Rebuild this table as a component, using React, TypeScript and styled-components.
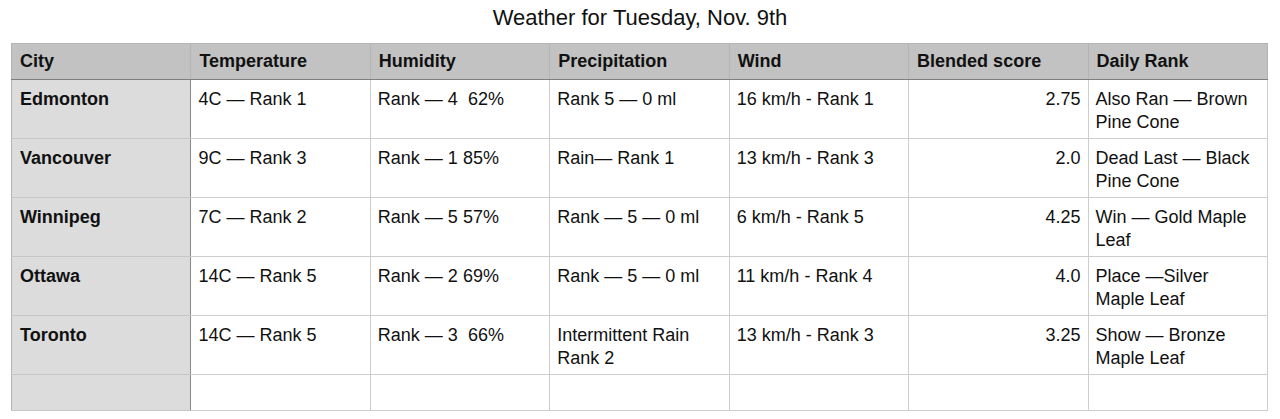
import React from "react";
import styled, { createGlobalStyle } from "styled-components";

const GlobalStyle = createGlobalStyle`
  html, body { margin: 0; padding: 0; background: #ffffff; }
  body { font-family: "Liberation Sans", Arial, Helvetica, sans-serif; color: #111111; }
`;

const Page = styled.div`
  display: flex;
  flex-direction: column;
  align-items: flex-start;
  padding: 5px 0 0 11px;
  width: 1280px;
  box-sizing: border-box;
`;

const Title = styled.h1`
  align-self: stretch;
  margin: 0 11px 13px 0;
  font-size: 22px;
  line-height: 25px;
  font-weight: 400;
  text-align: center;
  color: #111111;
`;

const Table = styled.table`
  width: 1257px;
  table-layout: fixed;
  border-collapse: collapse;
  font-size: 18px;
  line-height: 22.5px;
`;

const HeaderCell = styled.th`
  height: 36px;
  box-sizing: border-box;
  padding: 0 8px;
  background: #c1c2c1;
  border: 1px solid #b3b4b3;
  border-bottom: 1px solid #7e7f7e;
  text-align: left;
  font-weight: 700;
  vertical-align: middle;
`;

const Row = styled.tr<{ $short?: boolean }>`
  height: ${(p) => (p.$short ? "36px" : "59px")};
`;

const CityCell = styled.td`
  padding: 8px 8px 0 8px;
  background: #dcdcdc;
  border: 1px solid #c6c6c6;
  border-left-color: #b3b4b3;
  border-right: 1px solid #8a8a8a;
  font-weight: 700;
  vertical-align: top;
`;

const Cell = styled.td<{ $align?: "left" | "right" }>`
  padding: 8px 7px 0 7px;
  background: #ffffff;
  border: 1px solid #cdcdcd;
  text-align: ${(p) => p.$align ?? "left"};
  vertical-align: top;
  white-space: pre-wrap;
`;

const headers = [
  "City",
  "Temperature",
  "Humidity",
  "Precipitation",
  "Wind",
  "Blended score",
  "Daily Rank",
];

const rows = [
  ["Edmonton", "4C — Rank 1", "Rank — 4  62%", "Rank 5 — 0 ml", "16 km/h - Rank 1", "2.75", "Also Ran — Brown Pine Cone"],
  ["Vancouver", "9C — Rank 3", "Rank — 1 85%", "Rain— Rank 1", "13 km/h - Rank 3", "2.0", "Dead Last — Black Pine Cone"],
  ["Winnipeg", "7C — Rank 2", "Rank — 5 57%", "Rank — 5 — 0 ml", "6 km/h - Rank 5", "4.25", "Win — Gold Maple Leaf"],
  ["Ottawa", "14C — Rank 5", "Rank — 2 69%", "Rank — 5 — 0 ml", "11 km/h - Rank 4", "4.0", "Place —Silver Maple Leaf"],
  ["Toronto", "14C — Rank 5", "Rank — 3  66%", "Intermittent Rain Rank 2", "13 km/h - Rank 3", "3.25", "Show — Bronze Maple Leaf"],
];

export default function App() {
  return (
    <>
      <GlobalStyle />
      <Page>
        <Title>Weather for Tuesday, Nov. 9th</Title>
        <Table>
          <thead>
            <tr>
              {headers.map((h) => (
                <HeaderCell key={h}>{h}</HeaderCell>
              ))}
            </tr>
          </thead>
          <tbody>
            {rows.map((r) => (
              <Row key={r[0]}>
                <CityCell>{r[0]}</CityCell>
                {r.slice(1).map((v, i) => (
                  <Cell key={i} $align={i === 4 ? "right" : "left"}>
                    {v}
                  </Cell>
                ))}
              </Row>
            ))}
            <Row $short>
              <CityCell />
              {[0, 1, 2, 3, 4, 5].map((i) => (
                <Cell key={i} />
              ))}
            </Row>
          </tbody>
        </Table>
      </Page>
    </>
  );
}
